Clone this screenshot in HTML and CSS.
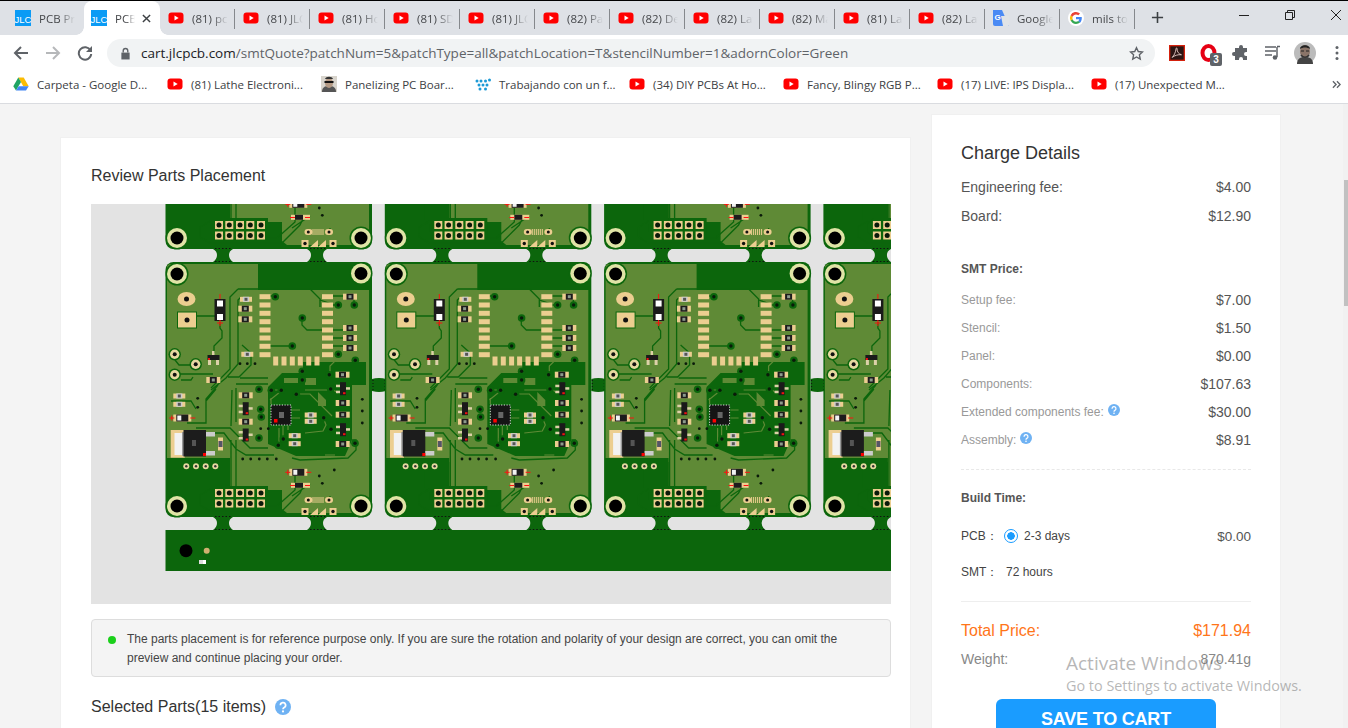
FILE: index.html
```html
<!DOCTYPE html>
<html lang="en">
<head>
<meta charset="utf-8">
<title>JLCPCB SMT Quote</title>
<link rel="stylesheet" href="styles.css">
</head>
<body>
<svg class="defs" aria-hidden="true">
  <defs>
    <symbol id="yt" viewBox="0 0 16 16"><rect x="0.5" y="2.5" width="15" height="11" rx="3" fill="#f00"/><path d="M6.5 5.5v5l4.2-2.5z" fill="#fff"/></symbol>
    <symbol id="jlc" viewBox="0 0 16 16"><rect width="16" height="16" fill="#0a9bf5"/><text x="8" y="12.500" text-anchor="middle" class="jlc-text">JLC</text></symbol>
    <symbol id="gt" viewBox="0 0 16 16"><path d="M0 0h9l7 16H2a2 2 0 0 1-2-2z" fill="#4a8af4"/><path d="M8 6l8 0v9a1 1 0 0 1-1 1H10z" fill="#e0e3e6"/><text x="4.5" y="10" text-anchor="middle" class="gt-text">G</text></symbol>
    <symbol id="g" viewBox="0 0 16 16"><circle cx="8" cy="8" r="8" fill="#fff"/><path d="M13.8 8.2c0-.5 0-.9-.1-1.3H8v2.4h3.3a2.9 2.9 0 0 1-1.2 1.9l1.9 1.5c1.1-1 1.8-2.600 1.800-4.500z" fill="#4285f4"/><path d="M8 14c1.600 0 3-.5 4-1.400l-1.900-1.500c-.5.4-1.200.6-2.100.6-1.600 0-2.900-1-3.400-2.500L2.600 10.200A6 6 0 0 0 8 14z" fill="#34a853"/><path d="M4.600 9.200a3.700 3.700 0 0 1 0-2.400L2.600 5.300a6 6 0 0 0 0 5.400z" fill="#fbbc05"/><path d="M8 4.400c.9 0 1.700.3 2.300.9l1.700-1.700A6 6 0 0 0 2.600 5.300l2 1.500C5.100 5.400 6.400 4.400 8 4.400z" fill="#ea4335"/></symbol>
    <symbol id="drive" viewBox="0 0 16 16"><path d="M5.300 1.500h5.400l5 8.700h-5.400z" fill="#fbbc04"/><path d="M5.300 1.500L.3 10.200l2.700 4.400 5-8.700z" fill="#1fa463"/><path d="M3 14.600h10l2.700-4.400H5.700z" fill="#4285f4"/></symbol>
    <symbol id="help" viewBox="0 0 16 16"><circle cx="8" cy="8" r="8" fill="#6fb2f3"/><path d="M5.400 6.200a2.600 2.600 0 1 1 3.800 2.300c-.8.4-1.200.8-1.200 1.700" fill="none" stroke="#fff" stroke-width="1.700"/><circle cx="8" cy="12.400" r="1.100" fill="#fff"/></symbol>

    <g id="via"><circle r="3.800" fill="#0c660c"/><circle r="1.700" fill="#0a1a0a"/></g>
    <g id="dot"><circle r="1.400" fill="#0a1a0a"/></g>
    <g id="res"><rect x="-7" y="-3" width="14" height="6" fill="#ecce90"/><rect x="-3.500" y="-3" width="7" height="6" fill="#1c1c1c"/><rect x="-1.500" y="-1.500" width="3" height="3" fill="#8d9a8d"/></g>
    <g id="ress"><rect x="-6" y="-2.500" width="12" height="5" fill="#ecce90"/><rect x="-3" y="-2.500" width="6" height="5" fill="#ccc"/><rect x="-1.500" y="-1.500" width="3" height="3" fill="#555"/></g>
    <g id="sot"><rect x="-3" y="-6.500" width="6" height="13" fill="#1a1a1a"/><rect x="-7" y="-4" width="4" height="2.500" fill="#ddd1a8"/><rect x="-7" y="2" width="4" height="2.500" fill="#ddd1a8"/><rect x="3" y="-1.500" width="4" height="2.500" fill="#ddd1a8"/><rect x="0" y="3.500" width="2.500" height="2" fill="#e11"/></g>
    <g id="hole"><circle r="11.500" fill="#0c660c"/><circle r="10" fill="#e0e4a6"/><circle r="6.500" fill="#000"/></g>
    <g id="tp"><circle r="6.200" fill="#0c660c"/><circle r="4.700" fill="#e6d9a0"/><circle r="2" fill="#111"/></g>
    <g id="pin"><rect x="-4" y="-4" width="8" height="8" fill="#ecce90"/><circle r="2.500" fill="#0a1a0a"/></g>
    <g id="pd"><rect x="-5.500" y="-2.500" width="11" height="5" fill="#ecce90"/></g>
    <g id="pv"><rect x="-2.500" y="-4.500" width="5" height="9" fill="#ecce90"/></g>
    <g id="diode"><rect x="-9" y="-3.500" width="18" height="7" fill="#ecce90"/><rect x="-6" y="-3.500" width="12" height="7" fill="#1c1c1c"/><rect x="-5" y="-2.500" width="4" height="5" fill="#f2f2f2"/><rect x="-13" y="-.5" width="5" height="1" fill="#f11"/><rect x="8" y="-.5" width="5" height="1" fill="#f11"/><rect x="-11" y="-2.500" width="1" height="5" fill="#f11"/></g>

    <g id="board">
      <rect x="165.500" y="262" width="206.500" height="255" rx="8" fill="#0c660c"/>
      <path d="M167 268q0-4 4-4h87v26h111v223h-82l-5-4v-19h-52v-32h-63z" fill="#5f8a36"/>
      <path d="M282 373h21v-11h63v23h-14v55l-7 16h-49l-28-12v-57z" fill="#0c660c"/>
      <path d="M305 378h11v7h-11zM318 392l8 8v6h-8zM284 378h14v5h-14z" fill="#5f8a36"/>
      <path d="M205 462h25v26h-25z" fill="#0c660c"/>
      <path d="M172 430h40l8 8 10 14v6h-58z" fill="#5f8a36"/>
      <path d="M210 492l6-6h52v20h-52l-6-6z" fill="#0c660c"/>

      <g class="tr">
        <path d="M187 316h28M220 322v6l2 3v7l-8 8v7M238 289h72l10 10v8M238 289l-8 8v72l-14 14-5 5"/>
        <path d="M241 297l-3 3v64l-12 14-15 12M242 345l9 8v12l-12 12h-11M270 296h5M270 346h22M322 330h-15l-5-5v-7M333 296h10M333 330h10M333 338h10M333 346h12M333 305h5M343 296h11v9"/>
        <path d="M175 360l4 5h16M175 374h38M181 380h10l2-3M218 385l-12 14v24h-19M216 389l-10 12M171 401h20l5 8"/>
        <path d="M320 300l12 4M236 384h32M232 390l-1 36M240 378h28M236 388v34"/>
        <path d="M196 428h34l20 20h18M210 433h14l12 16 10 6h28M231 440v50l-6 6h-10M236 440v48"/>
        <path d="M306 470h-5l-6 6v14l-18 16h-20M330 500v-4M292 496l18-12M295 487h8l-3 6-18 18H210l-10-6v-10l10-6"/>
        <path d="M352 440h4v10l-8 8-48 2-8-2"/>
      </g>
      <g class="tl">
        <path d="M268 390h14M296 394h14l22 22M279 428v16M283 426v10M288 426v4M323 417l3 8-3 6-18 2M332 389l6 4M330 374v-8l6-6h14M335 455h-10M270 400l10-8M305 390h24M271 398v6M292 410h8M292 418h8"/>
      </g>

      <use href="#hole" x="177" y="274"/><use href="#hole" x="361" y="273.500"/><use href="#hole" x="177" y="506"/><use href="#hole" x="361" y="506"/>
      <ellipse cx="186.500" cy="299" rx="9" ry="7" fill="#ecce90"/><circle cx="186.500" cy="299" r="2.500" fill="#111"/>
      <rect x="177.500" y="312" width="19" height="16" fill="#ecce90" stroke="#0c660c"/><circle cx="187" cy="320" r="2.500" fill="#111"/>
      <rect x="214.500" y="299" width="11" height="22" fill="#1a1a1a"/><rect x="217" y="300.500" width="6" height="6" fill="#fff"/><rect x="217" y="314" width="6" height="6" fill="#fff"/>
      <rect x="219.500" y="294" width="1" height="5" fill="#f11"/><rect x="219.500" y="320" width="1" height="6" fill="#f11"/><rect x="217" y="322.500" width="6" height="1" fill="#f11"/>

      <use href="#pd" x="265" y="296.700"/><use href="#pd" x="265" y="305"/><use href="#pd" x="265" y="313.300"/><use href="#pd" x="265" y="321.700"/><use href="#pd" x="265" y="330"/><use href="#pd" x="265" y="338"/><use href="#pd" x="265" y="346.300"/><use href="#pd" x="265" y="354.700"/>
      <use href="#pd" x="327.500" y="296.700"/><use href="#pd" x="327.500" y="305"/><use href="#pd" x="327.500" y="313.300"/><use href="#pd" x="327.500" y="321.700"/><use href="#pd" x="327.500" y="330"/><use href="#pd" x="327.500" y="338"/><use href="#pd" x="327.500" y="346.300"/><use href="#pd" x="327.500" y="354.700"/>
      <use href="#pv" x="275.700" y="361"/><use href="#pv" x="284" y="361"/><use href="#pv" x="292.300" y="361"/><use href="#pv" x="300.300" y="361"/><use href="#pv" x="308.700" y="361"/><use href="#pv" x="317" y="361"/>

      <use href="#ress" x="246" y="299.300"/><use href="#res" x="245.300" y="308.700"/><use href="#res" x="245.300" y="319.300"/><use href="#ress" x="247.300" y="354.300"/>
      <use href="#res" x="350" y="296.700"/><use href="#res" x="350" y="328"/><use href="#res" x="350" y="338"/><use href="#res" x="350" y="348"/>
      <use href="#res" x="213.300" y="380"/><use href="#res" x="342.500" y="374.700"/><use href="#res" x="342.700" y="403"/><use href="#res" x="342.700" y="414.700"/><use href="#res" x="342.700" y="444"/>
      <use href="#res" x="245.700" y="395.300"/><use href="#res" x="245.700" y="421.700"/><use href="#ress" x="310.700" y="415"/><use href="#ress" x="310.700" y="421.300"/><use href="#ress" x="294.700" y="435.700"/><use href="#ress" x="294.700" y="443.700"/>
      <use href="#ress" x="179.300" y="396"/><use href="#ress" x="179.300" y="404.300"/>
      <use href="#sot" x="245.700" y="408.700"/><use href="#sot" x="245.700" y="435"/><use href="#sot" x="343" y="388.700"/><use href="#sot" x="343" y="429.700"/>
      <rect x="207.500" y="355" width="12" height="5" fill="#1a1a1a"/><rect x="208" y="360" width="3" height="5" fill="#ddd1a8"/><rect x="216" y="360" width="3" height="5" fill="#ddd1a8"/><rect x="212" y="351" width="2.500" height="4" fill="#ddd1a8"/><rect x="208" y="358" width="2" height="2" fill="#e11"/>

      <use href="#via" x="275.300" y="296.700"/><use href="#via" x="338.300" y="305"/><use href="#via" x="354.300" y="305"/><use href="#via" x="302.300" y="318"/><use href="#via" x="292.300" y="346"/><use href="#via" x="338.300" y="354.300"/><use href="#via" x="355.300" y="360.300"/><use href="#via" x="302.300" y="371.300"/><use href="#via" x="302.300" y="380"/><use href="#via" x="329.300" y="374.700"/>
      <use href="#via" x="259" y="389.300"/><use href="#via" x="271.300" y="390.300"/><use href="#via" x="281.300" y="390.300"/><use href="#via" x="296.300" y="394.300"/>
      <use href="#via" x="260.700" y="409.300"/><use href="#via" x="261.300" y="417"/><use href="#via" x="259" y="438"/><use href="#via" x="323.700" y="417.700"/><use href="#via" x="330.700" y="389"/><use href="#via" x="331" y="429.300"/><use href="#via" x="283.300" y="439"/><use href="#via" x="278.300" y="445.300"/><use href="#via" x="355" y="443.300"/>

      <use href="#dot" x="240" y="363.700"/><use href="#dot" x="247.300" y="363.700"/><use href="#dot" x="255" y="363.700"/>
      <use href="#dot" x="260.700" y="428.700"/><use href="#dot" x="268.300" y="428.700"/><use href="#dot" x="362.300" y="399.300"/><use href="#dot" x="362.300" y="411"/><use href="#dot" x="362.300" y="423"/>
      <use href="#dot" x="197.700" y="398.300"/><use href="#dot" x="197.700" y="407.300"/>
      <use href="#dot" x="242.700" y="459"/><use href="#dot" x="250.700" y="459"/><use href="#dot" x="259.300" y="459"/><use href="#dot" x="267.300" y="459"/><use href="#dot" x="276.300" y="459"/>
      <use href="#dot" x="319.300" y="476"/><use href="#dot" x="334.300" y="470"/><use href="#dot" x="322.300" y="483.300"/>

      <use href="#tp" x="174.700" y="354.300"/><use href="#tp" x="195.700" y="364.300"/><use href="#tp" x="174.700" y="374.700"/>

      <rect x="271" y="405" width="20" height="20" fill="#151515" stroke="#ddd" stroke-dasharray="1.200 1.500"/><rect x="279" y="412" width="5" height="6" fill="#666"/><rect x="274" y="419" width="3.500" height="3.500" fill="#f00"/>

      <use href="#diode" x="182.300" y="418"/>
      <rect x="170.700" y="430" width="14" height="27.700" fill="#ecce90"/><rect x="174.500" y="433" width="8" height="22" fill="#f2f2f2"/><rect x="182" y="432" width="2" height="24" fill="#999"/>
      <rect x="183.500" y="430" width="22.500" height="26.500" fill="#1c1c1c"/><rect x="192" y="440" width="4" height="6" fill="#555"/>
      <rect x="206" y="432" width="9" height="4.500" fill="#ccc"/><rect x="206" y="451" width="9" height="4.500" fill="#ccc"/><rect x="203" y="453" width="3" height="3" fill="#f00"/>
      <rect x="218" y="437.500" width="5" height="13" fill="#ecce90"/><rect x="218.500" y="441" width="4" height="6" fill="#556"/>
      <circle cx="186.300" cy="466.300" r="3" fill="#e6d9a0"/><circle cx="196" cy="466.300" r="3" fill="#e6d9a0"/><circle cx="205.700" cy="466.300" r="3" fill="#e6d9a0"/><circle cx="215.300" cy="466.300" r="3" fill="#e6d9a0"/>
      <circle cx="186.300" cy="466.300" r="1.200" fill="#333"/><circle cx="196" cy="466.300" r="1.200" fill="#333"/><circle cx="205.700" cy="466.300" r="1.200" fill="#333"/><circle cx="215.300" cy="466.300" r="1.200" fill="#333"/>

      <use href="#pin" x="219" y="493"/><use href="#pin" x="229.300" y="493"/><use href="#pin" x="240" y="493"/><use href="#pin" x="250.300" y="493"/><use href="#pin" x="261" y="493"/>
      <use href="#pin" x="219" y="503.500"/><use href="#pin" x="229.300" y="503.500"/><use href="#pin" x="240" y="503.500"/><use href="#pin" x="250.300" y="503.500"/><use href="#pin" x="261" y="503.500"/>

      <use href="#diode" x="298.300" y="472.300"/>
      <rect x="291" y="482.800" width="19" height="5" fill="#ecce90"/><rect x="295" y="482.800" width="8" height="5" fill="#1c1c1c"/><rect x="290" y="485" width="5" height="1" fill="#f11"/><rect x="305" y="485" width="5" height="1" fill="#f11"/>

      <rect x="304.500" y="497" width="8" height="6" rx="3" fill="#ecce90"/><rect x="325" y="497" width="8" height="6" rx="3" fill="#ecce90"/><circle cx="308.300" cy="500" r="1.500" fill="#111"/><circle cx="329" cy="500" r="1.500" fill="#111"/>
      <path d="M313 497v6M315 497v6M317 497v6M319 497v6M321 497v6M323 497v6" stroke="#ecce90" fill="none"/>
      <rect x="301.500" y="508" width="7" height="7" fill="#ecce90"/><rect x="329.500" y="508" width="7" height="7" fill="#ecce90"/><circle cx="305" cy="511.500" r="1.700" fill="#111"/><circle cx="333" cy="511.500" r="1.700" fill="#111"/>
      <path d="M310 515l8-7v7zM318 515l8-7v7z" fill="#ecce90"/>

      <path d="M213 517q4 2 4 6t-4 7h20q-4-3-4-7t4-6zM307 517q4 2 4 6t-4 7h20q-4-3-4-7t4-6z" fill="#0c660c"/>
      <path d="M372 379q3-1 7-1t7 1v12q-4 1-7 1t-7-1z" fill="#0c660c"/>
      <path d="M373 380v10M385 380v10" stroke="#111" stroke-dasharray="1 2" fill="none"/>
      <path d="M215 516.500h16M310 516.500h16M215 529.500h16M310 529.500h16" stroke="#111" stroke-dasharray="1.500 2" fill="none"/>
    </g>
    <g id="col"><use href="#board"/><use href="#board" y="-268"/></g>
  </defs>
</svg>

<header class="chrome">
  <div class="tabstrip">
    <div class="tab first"><svg class="fav"><use href="#jlc"/></svg><span class="tname">PCB Prototype</span></div>
    <div class="tab active"><svg class="fav"><use href="#jlc"/></svg><span class="tname">PCB Assembly</span><svg class="tclose" viewBox="0 0 10 10"><path d="M1 1l8 8M9 1l-8 8"/></svg></div>
    <div class="tab"><svg class="fav"><use href="#yt"/></svg><span class="tname">(81) pcb panel</span></div>
    <div class="tab"><svg class="fav"><use href="#yt"/></svg><span class="tname">(81) JLCPCB</span></div>
    <div class="tab"><svg class="fav"><use href="#yt"/></svg><span class="tname">(81) How to</span></div>
    <div class="tab"><svg class="fav"><use href="#yt"/></svg><span class="tname">(81) SDR radio</span></div>
    <div class="tab"><svg class="fav"><use href="#yt"/></svg><span class="tname">(81) JLCPCB</span></div>
    <div class="tab"><svg class="fav"><use href="#yt"/></svg><span class="tname">(82) Panel</span></div>
    <div class="tab"><svg class="fav"><use href="#yt"/></svg><span class="tname">(82) Design</span></div>
    <div class="tab"><svg class="fav"><use href="#yt"/></svg><span class="tname">(82) Lathe</span></div>
    <div class="tab"><svg class="fav"><use href="#yt"/></svg><span class="tname">(82) Making</span></div>
    <div class="tab"><svg class="fav"><use href="#yt"/></svg><span class="tname">(81) Lathe</span></div>
    <div class="tab"><svg class="fav"><use href="#yt"/></svg><span class="tname">(82) Lathe</span></div>
    <div class="tab"><svg class="fav"><use href="#gt"/></svg><span class="tname">Google Translate</span></div>
    <div class="tab"><svg class="fav"><use href="#g"/></svg><span class="tname">mils to mm</span></div>
    <svg class="newtab" viewBox="0 0 14 14"><path d="M7 1v12M1 7h12"/></svg>
    <div class="winctl">
      <svg viewBox="0 0 12 12"><path d="M1 6.500h10"/></svg>
      <svg viewBox="0 0 12 12"><path d="M1.500 3.500h7v7h-7zM3.500 3.500v-2h7v7h-2"/></svg>
      <svg viewBox="0 0 12 12"><path d="M1 1l10 10M11 1L1 11"/></svg>
    </div>
  </div>
  <div class="toolbar">
    <svg class="nav" viewBox="0 0 16 16"><path class="ns" d="M15 8H2M8 2L2 8l6 6"/></svg>
    <svg class="nav off" viewBox="0 0 16 16"><path class="ns" d="M1 8h13M8 2l6 6-6 6"/></svg>
    <svg class="nav" viewBox="0 0 16 16"><path class="ns" d="M13.500 5.500A6.200 6.200 0 1 0 14.200 9"/><path class="nf" d="M15 1v6H9z"/></svg>
    <div class="omnibox">
      <svg class="lock" viewBox="0 0 12 14"><path class="nf" d="M1.500 6h9v7.500h-9z"/><path class="ns thin" d="M3.500 6V4a2.500 2.500 0 0 1 5 0v2"/></svg>
      <span class="url"><span class="host">cart.jlcpcb.com</span>/smtQuote?patchNum=5&amp;patchType=all&amp;patchLocation=T&amp;stencilNumber=1&amp;adornColor=Green</span>
      <svg class="star" viewBox="0 0 16 16"><path class="ns thin" d="M8 1.800l1.900 4.100 4.500.5-3.300 3 .9 4.500L8 11.700l-4 2.200.9-4.500-3.300-3 4.500-.5z"/></svg>
    </div>
    <div class="exts">
      <svg class="ext acro" viewBox="0 0 18 18"><rect x=".75" y=".75" width="16.500" height="16.500" fill="#2b1513" stroke="#d4210d" stroke-width="1.500"/><path d="M3.500 14c2-1.500 4-6 4.500-10 .1-1 1-1 1 0 0 4 2 6 5 7-4-.4-7 .5-10.500 3z" fill="none" stroke="#e9cfc9"/></svg>
      <span class="opera"><svg class="ext" viewBox="0 0 18 18"><ellipse cx="8.500" cy="9" rx="6" ry="7" fill="none" stroke="#e60014" stroke-width="4"/></svg><b class="badge">3</b></span>
      <svg class="ext puzzle" viewBox="0 0 18 18"><path class="nf" d="M7 3a2 2 0 0 1 4 0v1h4v4h-1a2 2 0 0 0 0 4h1v4h-4v-1a2 2 0 0 0-4 0v1H3v-4H2a2 2 0 0 1 0-4h1V4h4z"/></svg>
      <svg class="ext music" viewBox="0 0 18 18"><path class="ns thin" d="M1 3h11M1 7h11M1 11h7"/><path class="ns thin" d="M13 3v10"/><circle cx="11" cy="13.500" r="2.300" class="nf"/><path class="ns thin" d="M13 2.500h3"/></svg>
      <svg class="avatar" viewBox="0 0 22 22"><circle cx="11" cy="11" r="11" fill="#bbb"/><path d="M3 22c0-6 4-7 8-7s8 1 8 7z" fill="#444"/><ellipse cx="11" cy="9.500" rx="5" ry="6.500" fill="#8a7468"/><path d="M6 7c0-5 10-5 10 0-3-2-7-2-10 0z" fill="#222"/><path d="M7 9h3M12 9h3" stroke="#222"/><path d="M7 13c2 3 6 3 8 0" fill="none" stroke="#333" stroke-width="1.500"/></svg>
      <svg class="menu" viewBox="0 0 4 16"><circle cx="2" cy="2.500" r="1.500"/><circle cx="2" cy="8" r="1.500"/><circle cx="2" cy="13.500" r="1.500"/></svg>
    </div>
  </div>
  <div class="bookmarks">
    <a class="bm"><svg class="fav"><use href="#drive"/></svg><span>Carpeta - Google D...</span></a>
    <a class="bm"><svg class="fav"><use href="#yt"/></svg><span>(81) Lathe Electroni...</span></a>
    <a class="bm"><svg class="fav" viewBox="0 0 16 16"><rect width="16" height="16" fill="#d8d4cc"/><path d="M1 16c0-5 3-6 7-6s7 1 7 6z" fill="#555"/><ellipse cx="8" cy="7" rx="4" ry="5" fill="#b59a84"/><path d="M3.500 5h9v2h-9z" fill="#111"/><path d="M4 3c1-3 7-3 8 0z" fill="#333"/></svg><span>Panelizing PC Boar...</span></a>
    <a class="bm"><svg class="fav" viewBox="0 0 16 16"><g fill="#1c9ad6"><circle cx="2" cy="5" r="1.500"/><circle cx="6" cy="5" r="1.500"/><circle cx="10.500" cy="5" r="1.500"/><circle cx="14.500" cy="4" r="1.500"/><circle cx="4" cy="9" r="1.500"/><circle cx="8" cy="9" r="1.500"/><circle cx="12" cy="9" r="1.500"/><circle cx="5" cy="13" r="1.500"/><circle cx="10.500" cy="13" r="1.500"/></g></svg><span>Trabajando con un f...</span></a>
    <a class="bm"><svg class="fav"><use href="#yt"/></svg><span>(34) DIY PCBs At Ho...</span></a>
    <a class="bm"><svg class="fav"><use href="#yt"/></svg><span>Fancy, Blingy RGB P...</span></a>
    <a class="bm"><svg class="fav"><use href="#yt"/></svg><span>(17) LIVE: IPS Displa...</span></a>
    <a class="bm"><svg class="fav"><use href="#yt"/></svg><span>(17) Unexpected M...</span></a>
    <svg class="more" viewBox="0 0 10 10"><path d="M1 1.500L4.500 5 1 8.500M5.500 1.500L9 5 5.500 8.500"/></svg>
  </div>
</header>

<main class="page">
  <section class="card review">
    <h2 class="ctitle">Review Parts Placement</h2>
    <svg class="panel" viewBox="91 204 800 400" width="800" height="400">
      <rect x="91" y="204" width="800" height="400" fill="#e3e3e3"/>
      <rect x="165.500" y="530" width="726" height="41" fill="#0c660c"/>
      <use href="#col"/>
      <use href="#col" x="219.300"/>
      <use href="#col" x="438.600"/>
      <use href="#col" x="657.900"/>
      <circle cx="186" cy="550.700" r="6.500" fill="#000"/>
      <circle cx="206.700" cy="550.700" r="3" fill="#d0b070"/>
      <rect x="199" y="560" width="4" height="4" fill="#ddd"/><rect x="203" y="560" width="3" height="4" fill="#fff"/>
    </svg>
    <div class="notice">
      <i class="ndot"></i>
      <p>The parts placement is for reference purpose only. If you are sure the rotation and polarity of your design are correct, you can omit the preview and continue placing your order.</p>
    </div>
    <h2 class="ctitle parts">Selected Parts(15 items) <svg class="help big"><use href="#help"/></svg></h2>
  </section>

  <aside class="card charge">
    <h2 class="chead">Charge Details</h2>
    <div class="row r29"><span>Engineering fee:</span><span>$4.00</span></div>
    <div class="row r29"><span>Board:</span><span>$12.90</span></div>
    <h3 class="sub smt">SMT Price:</h3>
    <div class="row small"><span>Setup fee:</span><span>$7.00</span></div>
    <div class="row small"><span>Stencil:</span><span>$1.50</span></div>
    <div class="row small"><span>Panel:</span><span>$0.00</span></div>
    <div class="row small"><span>Components:</span><span>$107.63</span></div>
    <div class="row small"><span>Extended components fee: <svg class="help"><use href="#help"/></svg></span><span>$30.00</span></div>
    <div class="row small"><span>Assembly: <svg class="help"><use href="#help"/></svg></span><span>$8.91</span></div>
    <hr class="dash">
    <h3 class="sub">Build Time:</h3>
    <div class="row build pcb"><span class="bl"><span class="blabel">PCB：</span><i class="radio"></i>2-3 days</span><span class="bval">$0.00</span></div>
    <div class="row build"><span class="bl"><span class="blabel wide">SMT：</span>72 hours</span></div>
    <hr class="solid">
    <div class="row total"><span>Total Price:</span><span>$171.94</span></div>
    <div class="row weight"><span>Weight:</span><span>870.41g</span></div>
    <button class="save">SAVE TO CART</button>
  </aside>
</main>
<div class="scrolltrack"><div class="thumb"></div></div>
<div class="activate"><div class="a1">Activate Windows</div><div class="a2">Go to Settings to activate Windows.</div></div>
</body>
</html>
```
FILE: styles.css
```css
* { box-sizing: border-box; }
html, body { margin: 0; height: 728px; overflow: hidden; }
body { background: #f4f4f4; font-family: "Liberation Sans", Arial, sans-serif; color: #333; position: relative; }
.defs { position: absolute; width: 0; height: 0; }
.jlc-text { font: 9.500px "Liberation Sans", sans-serif; fill: #fff; }
.gt-text { font: bold 8px "Liberation Sans", sans-serif; fill: #fff; }

.tr path { fill: none; stroke: #0c660c; stroke-width: 1.300; }
.tl path { fill: none; stroke: #5f8a36; stroke-width: 1.200; }

.chrome { height: 104px; background: #fff; border-bottom: 1px solid #dadce0; font-family: "Open Sans", sans-serif; }
.tabstrip { height: 35px; background: #dee1e6; border-top: 1px solid #000; display: flex; padding-left: 8px; position: relative; }
.tab { width: 75px; height: 34px; display: flex; align-items: center; padding-left: 8px; position: relative; font-size: 11.500px; color: #45474a; flex: none; }
.tab::after { content: ""; position: absolute; right: 0; top: 8px; height: 20px; width: 1px; background: #85888c; }
.tab.first { width: 76px; padding-left: 7px; }
.tab.first::after { display: none; }
.tab.active { width: 76px; padding-left: 7px; background: #fff; border-radius: 8px 8px 0 0; z-index: 1; }
.tab.active::before, .tab.active::after { content: ""; position: absolute; bottom: 0; top: auto; width: 8px; height: 8px; }
.tab.active::before { left: -8px; background: radial-gradient(circle at 0 0, transparent 7.500px, #fff 8px); }
.tab.active::after { right: -8px; background: radial-gradient(circle at 100% 0, transparent 7.500px, #fff 8px); }
.fav { width: 16px; height: 16px; flex: none; }
.tname { margin-left: 8px; white-space: nowrap; overflow: hidden; width: 36px; flex: none; mask-image: linear-gradient(90deg, #000 55%, transparent 100%); }
.tab.active .tname { width: 20px; }
.tclose { width: 9px; height: 9px; margin-left: 7px; stroke: #3c4043; stroke-width: 1.600; fill: none; flex: none; }
.newtab { width: 13px; height: 13px; margin: 10px 0 0 16px; stroke: #3c4043; stroke-width: 1.700; fill: none; flex: none; }
.winctl { position: absolute; right: 6px; top: 8px; display: flex; gap: 34px; }
.winctl svg { width: 12px; height: 12px; stroke: #222; stroke-width: 1; fill: none; }

.toolbar { height: 36px; display: flex; align-items: center; padding-left: 13px; }
.nav { width: 16px; height: 16px; margin-right: 16px; flex: none; }
.nav.off { opacity: .45; }
.ns { fill: none; stroke: #5f6368; stroke-width: 2; }
.ns.thin { stroke-width: 1.500; }
.nf { fill: #5f6368; }
.omnibox { width: 1048px; height: 28px; margin-left: -2px; background: #f1f3f4; border-radius: 14px; display: flex; align-items: center; padding: 0 11px 0 13px; flex: none; }
.lock { width: 11px; height: 13px; flex: none; }
.url { margin-left: 10px; font-family: "Open Sans", sans-serif; font-size: 13.500px; color: #5f6368; white-space: nowrap; flex: 1; }
.host { color: #202124; }
.star { width: 15px; height: 15px; flex: none; }
.exts { display: flex; align-items: center; margin-left: 14px; }
.ext { width: 18px; height: 18px; flex: none; }
.acro { width: 16px; height: 16px; }
.opera { position: relative; margin-left: 15px; display: flex; width: 18px; height: 18px; }
.badge { position: absolute; left: 10px; top: 9px; width: 12px; height: 13px; background: #5f6368; color: #fff; font: bold 10px/13px "Liberation Sans", sans-serif; text-align: center; border-radius: 2px; }
.puzzle { margin-left: 14px; }
.music { margin-left: 14px; }
.avatar { width: 22px; height: 22px; margin-left: 12px; flex: none; }
.menu { width: 4px; height: 16px; margin-left: 19px; fill: #5f6368; flex: none; }

.bookmarks { height: 32px; display: flex; align-items: center; padding: 0 0 6px 13px; position: relative; }
.bm { width: 154px; display: flex; align-items: center; gap: 8px; font-size: 11.500px; color: #3c4043; white-space: nowrap; flex: none; }
.more { position: absolute; right: 7px; top: 9px; width: 9px; height: 9px; stroke: #5f6368; stroke-width: 1.500; fill: none; }

.page { display: flex; align-items: flex-start; gap: 20px; padding-left: 60px; height: 624px; overflow: hidden; }
.card { background: #fff; border: 1px solid #f0f0f0; flex: none; }
.review { width: 851px; height: 700px; margin-top: 33px; padding: 28px 19px 0 30px; }
.ctitle { margin: 0; height: 20px; font-size: 16px; font-weight: 400; line-height: 20px; color: #333; }
.panel { display: block; margin-top: 18px; }
.notice { margin-top: 15px; height: 58px; background: #f4f4f4; border: 1px solid #ddd; border-radius: 4px; display: flex; padding: 10px 20px 0 16px; }
.ndot { width: 8px; height: 8px; border-radius: 50%; background: #1bd01b; margin: 6px 11px 0 0; flex: none; }
.notice p { margin: 0; font-size: 12px; line-height: 18.500px; color: #444; }
.parts { margin-top: 20px; display: flex; align-items: center; gap: 9px; }
.help { width: 12px; height: 12px; margin-bottom: 4px; flex: none; }
.help.big { width: 16px; height: 16px; margin-bottom: 0; }

.charge { width: 350px; height: 700px; margin-top: 10px; padding: 25px 29px 0 29px; }
.chead { margin: 0; height: 26px; font-size: 18px; line-height: 26px; font-weight: 400; color: #333; }
.row { display: flex; justify-content: space-between; align-items: center; font-size: 14px; color: #555; }
.r29 { height: 29px; }
.chead + .r29 { margin-top: 6px; }
.sub { margin: 0; height: 28px; line-height: 28px; font-size: 12px; font-weight: bold; color: #555; }
.smt { margin-top: 25px; margin-bottom: 3px; }
.small { height: 28px; }
.small span:first-child { font-size: 12px; color: #999; display: flex; align-items: center; gap: 4px; }
.dash { border: 0; border-top: 1px dashed #e8e8e8; margin: 15px 0 14px; }
.build { height: 36px; font-size: 12px; color: #444; }
.pcb { margin-top: 6px; }
.bl { display: flex; align-items: center; }
.blabel { width: 36px; }
.blabel.wide { width: 45px; }
.radio { width: 14px; height: 14px; border-radius: 50%; border: 1.500px solid #1a9cff; margin: 0 6px 0 7px; flex: none; background: radial-gradient(circle, #1a9cff 3.500px, transparent 4px); }
.bval { font-size: 13.500px; color: #555; }
.solid { border: 0; border-top: 1px solid #eee; margin: 11px 0 14px; }
.total { height: 29px; font-size: 16px; color: #ff7519; }
.weight { height: 28px; color: #888; }
.save { display: block; width: 220px; height: 50px; margin: 26px 0 0 35px; border: 0; border-radius: 6px 6px 0 0; background: #1a9cff; color: #fff; font: bold 18px "Liberation Sans", sans-serif; letter-spacing: -.2px; padding: 0 0 10px; }

.scrolltrack { position: absolute; right: 0; top: 104px; width: 5px; height: 624px; background: #f1f1f1; }
.thumb { height: 126px; margin: 76px 0 0 1px; background: #c1c1c1; }
.activate { position: absolute; left: 1066px; top: 650px; color: rgba(110,110,110,.5); font-family: "Open Sans", sans-serif; pointer-events: none; }
.a1 { font-size: 19px; line-height: 26px; }
.a2 { font-size: 14.400px; line-height: 20px; }
```
